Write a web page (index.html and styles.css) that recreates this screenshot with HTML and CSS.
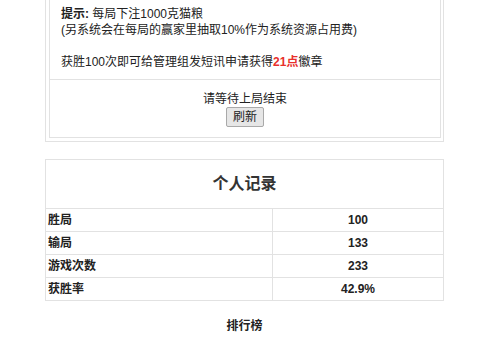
FILE: index.html
```html
<!DOCTYPE html>
<html lang="zh-CN">

<head>
    <meta charset="UTF-8">
    <meta name="viewport" content="width=device-width, initial-scale=1.0">
    <title>猜拳游戏</title>
    <link rel="stylesheet" href="styles.css">
</head>

<body>
    <div class="game-box">
        <table class="game-table">
            <tr>
                <td class="tips">
                    <b>提示:</b> 每局下注1000克猫粮<br>
                    (另系统会在每局的赢家里抽取10%作为系统资源占用费)<br>
                    <br>
                    获胜100次即可给管理组发短讯申请获得<b class="red">21点</b>徽章
                </td>
            </tr>
            <tr>
                <td class="wait">
                    <div>请等待上局结束</div>
                    <button class="refresh-btn">刷新</button>
                </td>
            </tr>
        </table>
    </div>

    <table class="record">
        <tr>
            <th colspan="2">个人记录</th>
        </tr>
        <tr>
            <td class="label">胜局</td>
            <td class="value">100</td>
        </tr>
        <tr>
            <td class="label">输局</td>
            <td class="value">133</td>
        </tr>
        <tr>
            <td class="label">游戏次数</td>
            <td class="value">233</td>
        </tr>
        <tr>
            <td class="label">获胜率</td>
            <td class="value">42.9%</td>
        </tr>
    </table>

    <div class="rank-title">排行榜</div>
</body>

</html>
```

FILE: styles.css
```css
* {
    margin: 0;
    padding: 0;
    box-sizing: border-box;
}

body {
    font-family: "Liberation Sans", "Noto Sans CJK SC", sans-serif;
    font-size: 12px;
    line-height: 16px;
    color: #222;
    background: #fff;
}

/* 上面的游戏框 */
.game-box {
    width: 399px;
    margin: -8px 0 0 45px;
    padding: 3px 2px 3px 3px;
    border: 1px solid #e2e2e2;
}

.game-table {
    width: 100%;
    border-collapse: collapse;
}

.game-table td {
    border: 1px solid #e2e2e2;
}

.tips {
    padding: 9px 11px;
}

.red {
    color: #e8302c;
}

.wait {
    text-align: center;
    padding: 11px 0 10px;
}

.refresh-btn {
    display: inline-block;
    vertical-align: top;
    height: 20px;
    padding: 0 6px;
    font-family: inherit;
    font-size: 12px;
    line-height: 18px;
    color: #222;
    background: #e6e6e6;
    border: 1px solid #a9a9a9;
    border-radius: 2px;
}

/* 个人记录 */
.record {
    width: 399px;
    margin: 17px 0 0 45px;
    border-collapse: collapse;
}

.record th,
.record td {
    border: 1px solid #e2e2e2;
}

.record th {
    height: 49px;
    font-size: 16px;
    font-weight: bold;
    color: #333;
}

.record td {
    height: 23px;
    font-weight: bold;
}

.record .label {
    width: 227px;
    padding-left: 2px;
}

.record .value {
    text-align: center;
}

.rank-title {
    width: 399px;
    margin: 17px 0 0 45px;
    text-align: center;
    font-weight: bold;
}
```
